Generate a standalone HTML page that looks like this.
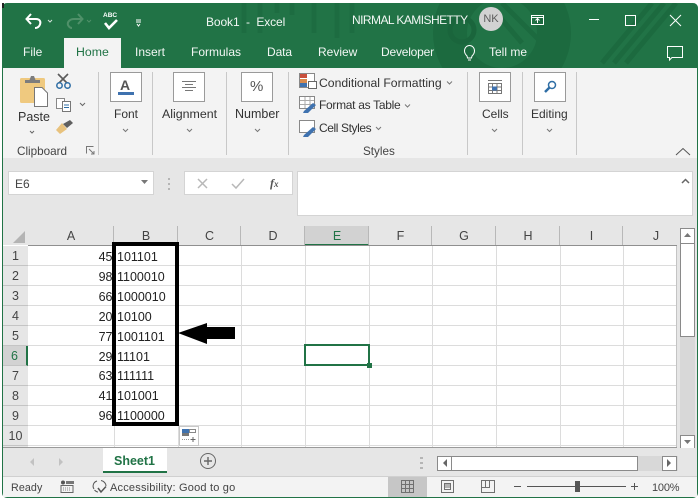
<!DOCTYPE html>
<html><head><meta charset="utf-8">
<style>
html,body{margin:0;padding:0;background:#fff}
#p{position:relative;width:700px;height:501px;overflow:hidden;background:#fff;font-family:"Liberation Sans",sans-serif;color:#333;filter:blur(.3px)}
#p div,#p span.t{position:absolute}
.t{white-space:nowrap;line-height:14px}
.b{position:absolute;background:#fff;border:1px solid #9a9a9a;box-sizing:border-box}
.sep{position:absolute;width:1px;background:#c8c8c8;top:72px;height:83px}
.ch{position:absolute;top:226px;height:19px;text-align:center;font-size:12.500px;line-height:21px;padding-left:1px;color:#444;background:#e6e6e6;border-right:1px solid #b8b8b8;box-sizing:border-box}
.rh{position:absolute;left:3px;width:25px;height:20px;text-align:center;font-size:12.500px;line-height:20px;color:#444;background:#e6e6e6;border-bottom:1px solid #c4c4c4;box-sizing:border-box}
.hl{position:absolute;left:28px;width:649px;height:1px;background:#dcdcdc}
.vl{position:absolute;top:246px;width:1px;height:202px;background:#dcdcdc}
.n{position:absolute;width:84.500px;text-align:right;left:28px;font-size:12.500px;line-height:16px;color:#222}
.v{position:absolute;left:117px;font-size:12.500px;line-height:16px;color:#222}
svg{position:absolute;overflow:visible}
</style></head><body><div id="p">

<!-- window frame -->
<div style="left:2px;top:3px;width:696px;height:495px;background:#f3f3f3;border-radius:5px 5px 5px 5px;border-left:1px solid #217346;border-right:1px solid #217346;border-bottom:1px solid #217346;box-sizing:border-box"></div>

<!-- title bar -->
<div style="left:2px;top:3px;width:696px;height:65px;background:#217346;border-radius:5px 5px 0 0;overflow:hidden">
<svg style="left:0;top:0" width="696" height="65" fill="none">
<g stroke="#1c6a3f" stroke-width="34"><circle cx="500" cy="30" r="52"/></g>
<circle cx="460" cy="27" r="12" stroke="#1a653c" stroke-width="5"/>
<g stroke="#1c6a3f" stroke-width="5"><path d="M600 60L650 0M612 60L662 0M624 60L674 0M490 5L520 40M500 0L540 40"/></g>
<g stroke="#1d6c41" stroke-width="5"><path d="M242 0V30M258 0V30M275 0V10M290 0V12M312 0V30M335 0V35M350 0V30"/></g>
</svg>
</div>
<div style="left:2px;top:3px;width:2px;height:5px;background:#222"></div>

<!-- QAT -->
<svg style="left:24px;top:12px" width="120" height="20" fill="none">
<path d="M3 7H12C16 7 17 10 16 12.500C15 15 13 16 11 16" stroke="#fff" stroke-width="2"/>
<path d="M7 2L2.500 7L7 12" stroke="#fff" stroke-width="2"/>
<path d="M24 8L26 10L28 8" stroke="#d5e4da" stroke-width="1"/>
<path d="M58 7H50C46 7 43 10 44 13C45 15 46 16 48 16" stroke="#4f9069" stroke-width="2"/>
<path d="M54 2L58.500 7L54 12" stroke="#4f9069" stroke-width="2"/>
<path d="M63 8L65 10L67 8" stroke="#4f9069" stroke-width="1"/>
<path d="M81 11L85 16L93 8" stroke="#fff" stroke-width="2.600"/>
<path d="M112 8H117M112 10H117" stroke="#fff" stroke-width="1"/><path d="M113 12L114.500 14L116 12" stroke="#fff" stroke-width="1"/>
</svg>
<span class="t" style="left:103px;top:12px;font-size:6.500px;font-weight:bold;color:#fff;line-height:8px">ABC</span>

<span class="t" style="left:206px;top:15px;font-size:12px;color:#f2f7f4;letter-spacing:-.1px">Book1&nbsp; -&nbsp; Excel</span>
<span class="t" style="left:352px;top:13px;font-size:12px;color:#f2f7f4;letter-spacing:-.55px">NIRMAL KAMISHETTY</span>
<div style="left:479px;top:7px;width:24px;height:24px;border-radius:50%;background:#d2d2d2;text-align:center;font-size:11px;line-height:24px;color:#5c5c5c">NK</div>
<svg style="left:530px;top:12px" width="160" height="20" fill="none" stroke="#fff">
<rect x="1.500" y="3.500" width="12" height="9"/><path d="M1.500 5.500H13.500" stroke-width="1"/><path d="M7.500 11V7M5.500 8.500L7.500 6.500L9.500 8.500"/>
<path d="M59 7.500H69"/>
<rect x="95.500" y="3.500" width="10" height="10"/>
<path d="M140 3L151 14M151 3L140 14"/>
</svg>

<!-- tabs -->
<div style="left:64px;top:38px;width:57px;height:30px;background:#f3f3f3"></div>
<span class="t" style="left:23px;top:45px;font-size:12px;color:#f2f7f4">File</span>
<span class="t" style="left:76px;top:45px;font-size:12.300px;color:#217346">Home</span>
<span class="t" style="left:135px;top:45px;font-size:12px;color:#f2f7f4">Insert</span>
<span class="t" style="left:191px;top:45px;font-size:12px;color:#f2f7f4">Formulas</span>
<span class="t" style="left:267px;top:45px;font-size:12px;color:#f2f7f4;letter-spacing:-.1px">Data</span>
<span class="t" style="left:318px;top:45px;font-size:12px;color:#f2f7f4">Review</span>
<span class="t" style="left:381px;top:45px;font-size:12px;color:#f2f7f4;letter-spacing:-.2px">Developer</span>
<span class="t" style="left:489px;top:45px;font-size:12px;color:#f2f7f4">Tell me</span>
<svg style="left:462px;top:44px" width="18" height="20" fill="none" stroke="#fff">
<path d="M5 12C3 10 2.500 8.500 2.500 7C2.500 3.500 5 1.500 7.500 1.500C10 1.500 12.500 3.500 12.500 7C12.500 8.500 12 10 10 12L9.500 14H5.500Z"/><path d="M6 16H9"/>
</svg>
<svg style="left:666px;top:45px" width="20" height="18" fill="none" stroke="#fff">
<path d="M1.500 1.500H16.500V12.500H6L3.500 15V12.500H1.500Z"/>
</svg>

<!-- ribbon -->
<div class="sep" style="left:98px"></div>
<div class="sep" style="left:152px"></div>
<div class="sep" style="left:226px"></div>
<div class="sep" style="left:288px"></div>
<div class="sep" style="left:467px"></div>
<div class="sep" style="left:522px"></div>
<div class="sep" style="left:576px"></div>

<!-- paste -->
<svg style="left:18px;top:74px" width="72" height="62" fill="none">
<rect x="2" y="4" width="25" height="25" rx="1.500" fill="#efc97f"/>
<path d="M7 9V6H11.500L13 2H16L17.500 6H22V9Z" fill="#7d7d7d"/>
<path d="M16.500 13.500H24L29.500 19V32.500H16.500Z" fill="#fff" stroke="#777"/>
<path d="M40 0L50 10M50 0L40 10" stroke="#5a5a5a" stroke-width="1.600"/>
<circle cx="41.500" cy="11.500" r="2.700" stroke="#2f6ea5" stroke-width="1.500" fill="#f3f3f3"/>
<circle cx="49.500" cy="11.500" r="2.700" stroke="#2f6ea5" stroke-width="1.500" fill="#f3f3f3"/>
<rect x="38.500" y="24.500" width="8" height="10" fill="#fff" stroke="#888"/>
<rect x="44.500" y="27.500" width="8" height="10" fill="#fff" stroke="#777"/>
<path d="M46 31H51M46 33.500H51" stroke="#2f6ea5"/>
<path d="M62 29L64.500 31.500L67 29" stroke="#666"/>
<path d="M38 56L44 49L49 55L42 60Z" fill="#e8c27d"/>
<path d="M45 50L52 46L55 49L49 54Z" fill="#5f5f5f"/>
<path d="M12 57L14 59L16 57" stroke="#666"/>
</svg>
<span class="t" style="left:18px;top:110px;font-size:12.500px;color:#333">Paste</span>
<span class="t" style="left:17px;top:145px;font-size:11.700px;color:#444">Clipboard</span>
<svg style="left:86px;top:146px" width="10" height="10" fill="none" stroke="#777"><path d="M.500 7.500V.500H7.500"/><path d="M3 3L8 8M8 5V8H5"/></svg>

<!-- Font -->
<div class="b" style="left:110px;top:72px;width:32px;height:30px"></div>
<span class="t" style="left:120px;top:78px;font-size:14px;color:#555;font-weight:bold;line-height:14px">A</span>
<div style="left:118px;top:92px;width:16px;height:3px;background:#3f72af"></div>
<span class="t" style="left:114px;top:107px;font-size:12px">Font</span>

<!-- Alignment -->
<div class="b" style="left:173px;top:72px;width:32px;height:30px"></div>
<svg style="left:181px;top:81px" width="16" height="12" stroke="#777"><path d="M1 .500H15M4 3.500H12M1 6.500H15M4 9.500H12"/></svg>
<span class="t" style="left:162px;top:107px;font-size:12.400px">Alignment</span>

<!-- Number -->
<div class="b" style="left:241px;top:72px;width:32px;height:30px"></div>
<span class="t" style="left:250px;top:80px;font-size:15px;color:#555">%</span>
<span class="t" style="left:235px;top:107px;font-size:12.500px">Number</span>

<!-- chevrons -->
<svg style="left:0;top:0" width="700" height="160" fill="none" stroke="#777">
<path d="M123 129L125.500 131.500L128 129"/>
<path d="M187 129L189.500 131.500L192 129"/>
<path d="M255 129L257.500 131.500L260 129"/>
<path d="M492 129L494.500 131.500L497 129"/>
<path d="M547 129L549.500 131.500L552 129"/>
<path d="M447 81.500L449.500 84L452 81.500"/>
<path d="M405 104.500L407.500 107L410 104.500"/>
<path d="M376 127L378.500 129.500L381 127"/>
<path d="M676 155L683 148.500L690 155" stroke="#555"/>
</svg>

<!-- Styles -->
<svg style="left:299px;top:73px" width="20" height="66" fill="none">
<rect x=".500" y=".500" width="15" height="14" fill="#fff" stroke="#888"/>
<rect x="1" y="1" width="7" height="4" fill="#c9503c"/><rect x="1" y="6" width="7" height="4" fill="#d98a4d"/><rect x="1" y="10" width="7" height="4" fill="#3f72af"/>
<rect x="9.500" y="8.500" width="8" height="7" fill="#fff" stroke="#666"/>
<rect x=".500" y="23.500" width="15" height="12" fill="#fff" stroke="#888"/>
<path d="M1 27.500H15M1 31.500H15M6 24V35M11 24V35" stroke="#aaa"/>
<path d="M5 38L14 30L17 32L9 40H4Z" fill="#3f72af"/>
<rect x=".500" y="47.500" width="15" height="12" fill="#fff" stroke="#888"/>
<path d="M5 62L14 54L17 56L9 64H4Z" fill="#3f72af"/>
</svg>
<span class="t" style="left:319px;top:76px;font-size:12.200px">Conditional Formatting</span>
<span class="t" style="left:319px;top:98px;font-size:12px;letter-spacing:-.3px">Format as Table</span>
<span class="t" style="left:319px;top:121px;font-size:12px;letter-spacing:-.4px">Cell Styles</span>
<span class="t" style="left:363px;top:145px;font-size:11.700px;color:#444">Styles</span>

<!-- Cells -->
<div class="b" style="left:479px;top:72px;width:32px;height:30px"></div>
<svg style="left:487px;top:79px" width="16" height="16" fill="none" stroke="#777">
<path d="M1 1.500H15" stroke-width="1"/><rect x="1.500" y="4.500" width="13" height="10" fill="#fff"/>
<path d="M1.500 8H14.500M1.500 11.500H14.500M5.500 4.500V14.500M10 4.500V14.500"/>
<rect x="5" y="7.500" width="5" height="4" fill="#3f72af" stroke="none"/>
</svg>
<span class="t" style="left:482px;top:107px;font-size:12px">Cells</span>

<!-- Editing -->
<div class="b" style="left:534px;top:72px;width:32px;height:30px"></div>
<svg style="left:542px;top:79px" width="16" height="16" fill="none" stroke="#2f6ea5">
<circle cx="10" cy="6" r="3.500" stroke-width="1.500"/><path d="M7.500 8.500L3 13" stroke-width="2.500"/>
</svg>
<span class="t" style="left:531px;top:107px;font-size:12px">Editing</span>

<!-- formula bar -->
<div style="left:3px;top:158px;width:694px;height:68px;background:#e6e6e6"></div>
<div style="left:8px;top:171px;width:146px;height:24px;background:#fff;border:1px solid #d4d4d4;box-sizing:border-box"></div>
<span class="t" style="left:15px;top:177px;font-size:12px;color:#444">E6</span>
<svg style="left:140px;top:180px" width="10" height="6"><path d="M1 0H8L4.500 4Z" fill="#777"/></svg>
<svg style="left:167px;top:177px" width="4" height="14"><path d="M1 1H3V3H1ZM1 6H3V8H1ZM1 11H3V13H1Z" fill="#b5b5b5"/></svg>
<div style="left:184px;top:171px;width:109px;height:24px;background:#fff;border:1px solid #d4d4d4;box-sizing:border-box"></div>
<svg style="left:197px;top:177px" width="50" height="14" fill="none" stroke="#b8b8b8" stroke-width="1.500">
<path d="M1 2L10 11M10 2L1 11"/><path d="M35 7L39 11L47 2"/>
</svg>
<span class="t" style="left:270px;top:176px;font-size:12px;font-family:'Liberation Serif',serif;font-style:italic;font-weight:bold;color:#555">f<span style="font-size:9px">x</span></span>
<div style="left:297px;top:171px;width:396px;height:45px;background:#fff;border:1px solid #d4d4d4;box-sizing:border-box"></div>
<svg style="left:681px;top:178px" width="10" height="7" fill="none" stroke="#666" stroke-width="1.500"><path d="M1 5L4.500 1.500L8 5"/></svg>

<!-- grid -->
<div style="left:3px;top:226px;width:694px;height:222px;background:#fff"></div>
<div style="left:3px;top:226px;width:25px;height:19px;background:#e6e6e6"></div>
<svg style="left:12px;top:230px" width="14" height="14"><path d="M13 1V13H1Z" fill="#b4b4b4"/></svg>
<div class="ch" style="left:28px;width:86px">A</div>
<div class="ch" style="left:114px;width:64px">B</div>
<div class="ch" style="left:178px;width:63px">C</div>
<div class="ch" style="left:241px;width:64px">D</div>
<div class="ch" style="left:305px;width:64px;background:#d2d2d2;color:#217346;border-bottom:2px solid #217346;height:20px">E</div>
<div class="ch" style="left:369px;width:63px">F</div>
<div class="ch" style="left:432px;width:64px">G</div>
<div class="ch" style="left:496px;width:64px">H</div>
<div class="ch" style="left:560px;width:63px">I</div>
<div class="ch" style="left:623px;width:66px">J</div>
<div style="left:677px;top:226px;width:20px;height:19px;background:#e6e6e6"></div>
<div style="left:28px;top:245px;width:649px;height:1px;background:#8f8f8f"></div>

<div class="rh" style="top:246px">1</div>
<div class="rh" style="top:266px">2</div>
<div class="rh" style="top:286px">3</div>
<div class="rh" style="top:306px">4</div>
<div class="rh" style="top:326px">5</div>
<div class="rh" style="top:346px;background:#d2d2d2;color:#217346;border-right:2px solid #217346">6</div>
<div class="rh" style="top:366px">7</div>
<div class="rh" style="top:386px">8</div>
<div class="rh" style="top:406px">9</div>
<div class="rh" style="top:426px">10</div>
<div class="rh" style="top:446px;height:2px"></div>

<div class="hl" style="top:265px"></div><div class="hl" style="top:285px"></div><div class="hl" style="top:305px"></div><div class="hl" style="top:325px"></div><div class="hl" style="top:345px"></div><div class="hl" style="top:365px"></div><div class="hl" style="top:385px"></div><div class="hl" style="top:405px"></div><div class="hl" style="top:425px"></div><div class="hl" style="top:445px"></div>
<div class="vl" style="left:114px"></div><div class="vl" style="left:178px"></div><div class="vl" style="left:241px"></div><div class="vl" style="left:305px"></div><div class="vl" style="left:369px"></div><div class="vl" style="left:432px"></div><div class="vl" style="left:496px"></div><div class="vl" style="left:560px"></div><div class="vl" style="left:623px"></div><div class="vl" style="left:676px;background:#c4c4c4"></div>

<div class="n" style="top:249px">45</div><div class="v" style="top:249px">101101</div>
<div class="n" style="top:269px">98</div><div class="v" style="top:269px">1100010</div>
<div class="n" style="top:289px">66</div><div class="v" style="top:289px">1000010</div>
<div class="n" style="top:309px">20</div><div class="v" style="top:309px">10100</div>
<div class="n" style="top:329px">77</div><div class="v" style="top:329px">1001101</div>
<div class="n" style="top:349px">29</div><div class="v" style="top:349px">11101</div>
<div class="n" style="top:368px">63</div><div class="v" style="top:368px">111111</div>
<div class="n" style="top:388px">41</div><div class="v" style="top:388px">101001</div>
<div class="n" style="top:408px">96</div><div class="v" style="top:408px">1100000</div>

<!-- black rectangle -->
<div style="left:112px;top:242px;width:67px;height:184px;border:4.500px solid #000;box-sizing:border-box"></div>
<!-- arrow -->
<svg style="left:178px;top:322px" width="58" height="24"><path d="M0 11L29 1V5H57V17H29V22Z" fill="#000"/></svg>

<!-- selected cell -->
<div style="left:304px;top:344px;width:66px;height:22px;border:2px solid #217346;box-sizing:border-box"></div>
<div style="left:367px;top:363px;width:5px;height:5px;background:#217346"></div>

<!-- paste options -->
<div style="left:179px;top:426px;width:20px;height:20px;background:#fff;border:1px solid #c8c8c8;box-sizing:border-box"></div>
<svg style="left:182px;top:429px" width="15" height="15" fill="none">
<rect x="0" y="0" width="7" height="4" fill="#3f72af"/><rect x="7.500" y=".500" width="6" height="3" stroke="#888"/>
<rect x="0" y="4" width="7" height="3" fill="#777"/><path d="M0 10.500H7" stroke="#999" stroke-dasharray="1 1"/><path d="M11 8V13M8.500 10.500H13.500" stroke="#666"/>
</svg>

<!-- scrollbar v -->
<div style="left:680px;top:243px;width:15px;height:94px;background:#fff;border:1px solid #8a8a8a;box-sizing:border-box"></div>
<div style="left:680px;top:337px;width:15px;height:98px;background:#d8d8d8"></div>
<div style="left:677px;top:226px;width:3px;height:222px;background:#e6e6e6"></div>
<div style="left:695px;top:226px;width:2px;height:222px;background:#e6e6e6"></div>
<div class="b" style="left:680px;top:228px;width:15px;height:16px;border-color:#8a8a8a"></div>
<svg style="left:683px;top:233px" width="10" height="6"><path d="M1 4H8L4.500 0Z" fill="#777"/></svg>
<div class="b" style="left:680px;top:435px;width:15px;height:14px;border-color:#8a8a8a"></div>
<svg style="left:683px;top:440px" width="10" height="6"><path d="M1 0H8L4.500 4Z" fill="#777"/></svg>

<!-- tab bar -->
<div style="left:3px;top:447px;width:674px;height:1px;background:#9a9a9a"></div>
<div style="left:3px;top:448px;width:694px;height:28px;background:#e6e6e6"></div>
<div style="left:103px;top:448px;width:64px;height:25px;background:#fff;border-bottom:2px solid #217346;box-sizing:border-box"></div>
<span class="t" style="left:114px;top:454px;font-size:12.500px;font-weight:bold;color:#217346">Sheet1</span>
<svg style="left:30px;top:458px" width="35" height="9"><path d="M4 0V8L0 4Z" fill="#c2c2c2"/><path d="M29 0V8L33 4Z" fill="#c2c2c2"/></svg>
<svg style="left:200px;top:453px" width="18" height="18" fill="none" stroke="#666"><circle cx="8" cy="8" r="7.500"/><path d="M4 8H12M8 4V12" stroke-width="1.400"/></svg>
<svg style="left:420px;top:457px" width="3" height="12"><path d="M0 0H3V2H0ZM0 5H3V7H0ZM0 10H3V12H0Z" fill="#b5b5b5"/></svg>
<div style="left:437px;top:456px;width:241px;height:15px;background:#d8d8d8"></div>
<div class="b" style="left:437px;top:456px;width:15px;height:15px;border-color:#8a8a8a"></div>
<div class="b" style="left:451px;top:456px;width:187px;height:15px;border-color:#8a8a8a"></div>
<div class="b" style="left:662px;top:456px;width:15px;height:15px;border-color:#8a8a8a"></div>
<svg style="left:442px;top:459px" width="232" height="9"><path d="M5 0V8L1 4Z" fill="#666"/><path d="M225 0V8L229 4Z" fill="#666"/></svg>

<!-- status bar -->
<div style="left:3px;top:476px;width:694px;height:1px;background:#d0d0d0"></div>
<div style="left:3px;top:477px;width:694px;height:20px;background:#f3f3f3"></div>
<span class="t" style="left:11px;top:481px;font-size:10.700px;color:#444;letter-spacing:.1px">Ready</span>
<svg style="left:60px;top:480px" width="15" height="14" fill="none">
<circle cx="3" cy="2.500" r="2" fill="#555"/><rect x="6" y="1" width="8" height="3" fill="#777"/>
<rect x="1" y="5.500" width="12" height="7" stroke="#666"/><path d="M3 8H11M3 10H11" stroke="#888" stroke-dasharray="1 1"/>
</svg>
<svg style="left:91px;top:479px" width="18" height="16" fill="none" stroke="#555">
<path d="M3 10C1 7 2.500 3 6 2M10 1.500C13 2 15 4.500 15 7M7 13C5.500 13 4.500 12 3.500 11"/>
<path d="M7 9L10 13L15 7.500" stroke-width="1.500"/>
</svg>
<span class="t" style="left:110px;top:481px;font-size:11px;color:#444;letter-spacing:.2px">Accessibility: Good to go</span>

<div style="left:388px;top:477px;width:39px;height:20px;background:#c6c6c6"></div>
<svg style="left:400px;top:479px" width="150" height="16" fill="none" stroke="#707070">
<rect x="1.500" y="1.500" width="12" height="12"/><path d="M5.500 1.500V13.500M9.500 1.500V13.500M1.500 5.500H13.500M1.500 9.500H13.500"/>
<rect x="41.500" y="1.500" width="12" height="12"/><rect x="44.500" y="4.500" width="6" height="6"/><path d="M45 6H50M45 8H50"/>
<rect x="81.500" y="1.500" width="13" height="12"/><path d="M81.500 8.500H89.500V1.500M85.500 1.500V8.500"/>
</svg>
<svg style="left:514px;top:479px" width="125" height="16" fill="none" stroke="#555">
<path d="M0 7.500H7"/><path d="M13 7.500H112"/><path d="M117 7.500H124M120.500 4V11"/>
<rect x="61" y="2" width="5" height="11" fill="#555" stroke="none"/>
</svg>
<span class="t" style="left:652px;top:481px;font-size:11px;color:#444;letter-spacing:-.2px">100%</span>

</div></body></html>
